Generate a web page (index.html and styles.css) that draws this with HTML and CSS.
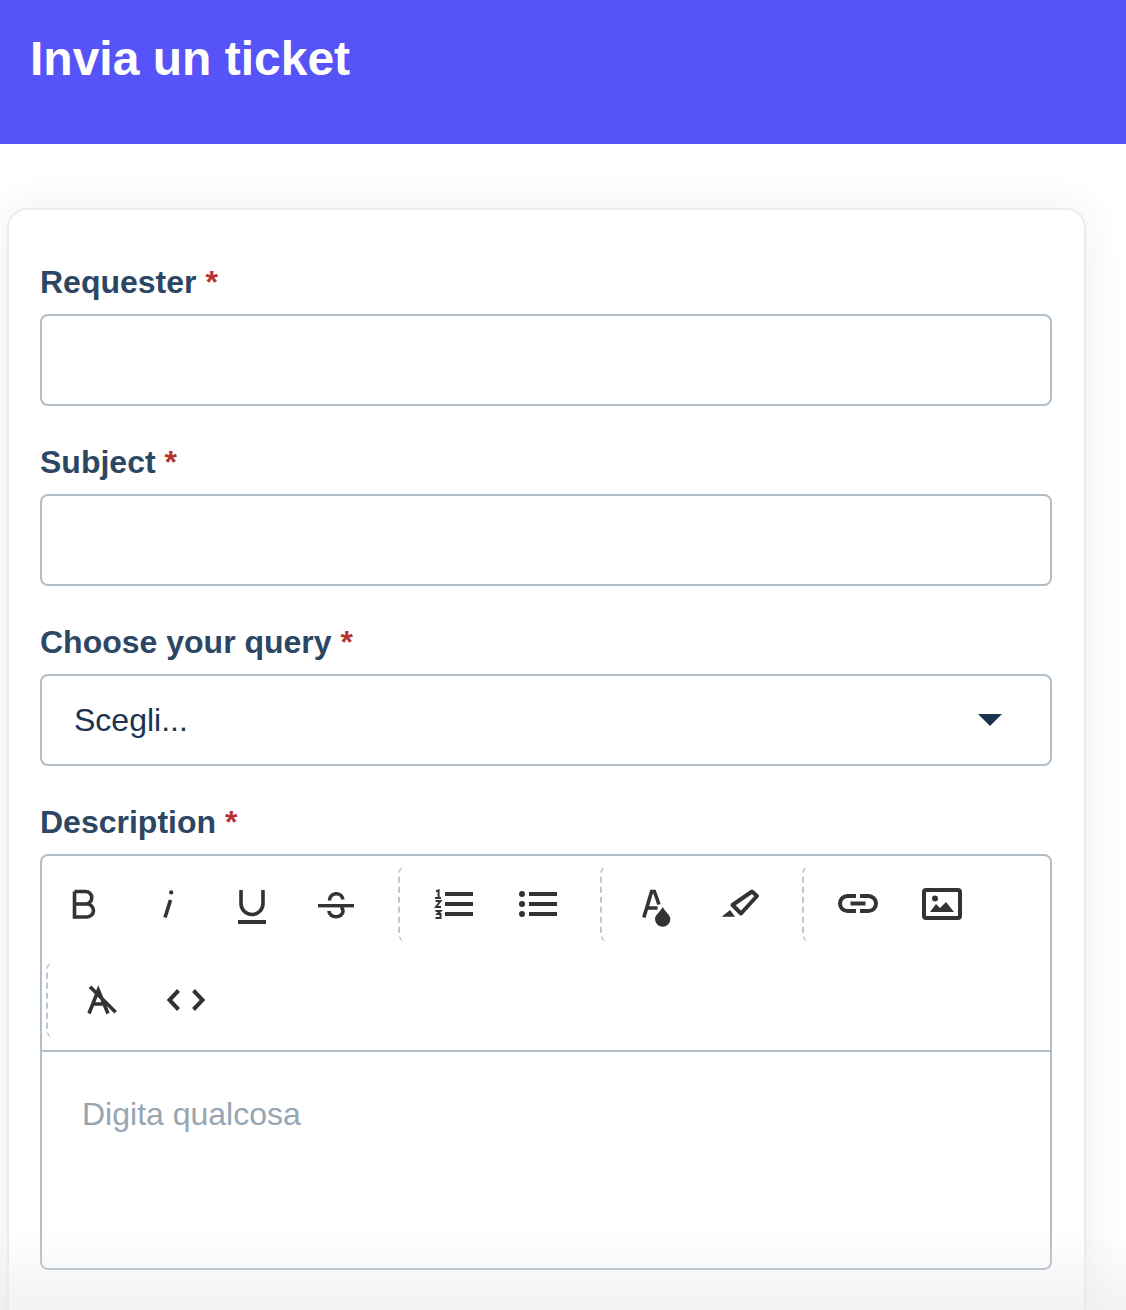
FILE: index.html
```html
<!DOCTYPE html>
<html lang="it">
<head>
<meta charset="utf-8">
<title>Invia un ticket</title>
<link rel="stylesheet" href="styles.css">
</head>
<body>
<header class="banner"><h1 class="banner-title">Invia un ticket</h1></header>
<main class="card">
  <div class="field">
    <label class="label">Requester <span class="req">*</span></label>
    <input class="control" type="text">
  </div>
  <div class="field">
    <label class="label">Subject <span class="req">*</span></label>
    <input class="control" type="text">
  </div>
  <div class="field">
    <label class="label">Choose your query <span class="req">*</span></label>
    <div class="select-wrap">
      <select class="control select"><option>Scegli...</option></select>
      <span class="caret"></span>
    </div>
  </div>
  <div class="field">
    <label class="label">Description <span class="req">*</span></label>
    <div class="editor">
      <div class="toolbar">
        <div class="group group-first">
          <button class="tool"><svg class="icon" viewBox="0 0 40 40"><path class="s3" d="M10.5 7.5H21.5a6.2 6.2 0 0 1 0 12.5H10.5M21.5 20H23a6.5 6.5 0 0 1 0 13H10.5V7.5"/></svg></button>
          <button class="tool"><svg class="icon" viewBox="0 0 40 40"><path class="s3" d="M22.5 16L17 33.5"/><circle class="f" cx="23.2" cy="8.4" r="2.1"/></svg></button>
          <button class="tool"><svg class="icon" viewBox="0 0 40 40"><path class="s3" d="M9 6V19.5a11 11 0 0 0 22 0V6"/><rect class="f" x="6" y="36" width="28" height="4"/></svg></button>
          <button class="tool"><svg class="icon" viewBox="0 0 40 40"><path class="s3" d="M13.5 16.5a6.8 7 0 0 1 13.5-1M13 27a7 5.8 0 0 0 14 0c0-2-.8-3-2-4"/><rect class="f" x="2" y="20" width="36" height="3.4"/></svg></button>
        </div>
        <div class="group">
          <button class="tool"><svg class="icon" viewBox="0 0 40 40"><path class="f" d="M11 8h28v4H11zM11 18h28v4H11zM11 28h28v4H11z"/><path class="s2" d="M2 7.2L4.6 6.4V14M1 14H7M1.5 17H6.5L2 23H7M1.5 27H6.5L3.5 30H6.5V34H1.5"/></svg></button>
          <button class="tool"><svg class="icon" viewBox="0 0 40 40"><path class="f" d="M11 8h28v4H11zM11 18h28v4H11zM11 28h28v4H11z"/><circle class="f" cx="4" cy="10" r="3"/><circle class="f" cx="4" cy="20" r="3"/><circle class="f" cx="4" cy="30" r="3"/></svg></button>
        </div>
        <div class="group">
          <button class="tool"><svg class="icon" viewBox="0 0 40 40"><path class="s3" d="M7.8 33.5L15.6 7.5H18.4L23 20.5M11 24H21.5"/><path class="f" d="M26.7 23C24 28 19 31 19 35a7.7 7.7 0 0 0 15.4 0C34.4 31 29.4 28 26.7 23Z"/></svg></button>
          <button class="tool"><svg class="icon" viewBox="0 0 40 40"><path class="s4 join" d="M32 7.5L37 12L21 29.5L12.5 21Z"/><path class="f" d="M1.7 32.7L10 26L15 32.7Z"/></svg></button>
        </div>
        <div class="group">
          <button class="tool"><svg class="icon" viewBox="0 0 40 40"><path class="s4" d="M18 12H9.5a7.5 7.5 0 0 0 0 15H18M22 12H30.5a7.5 7.5 0 0 1 0 15H22M12.5 19.5H27.5"/></svg></button>
          <button class="tool"><svg class="icon" viewBox="0 0 40 40"><rect class="s4" x="2" y="6" width="36" height="28" rx="2"/><circle class="f" cx="13" cy="14.5" r="3"/><path class="f" d="M8 28L14 20L18 24L24 18L32 28Z"/></svg></button>
        </div>
        <div class="group group-wrap">
          <button class="tool"><svg class="icon" viewBox="0 0 40 40"><path class="s3" d="M7 33.5L16.3 10L26 33.5M11 24H23M8 6.7L33.7 32.3"/></svg></button>
          <button class="tool"><svg class="icon" viewBox="0 0 40 40"><path class="s4" d="M12.5 10.5L3.5 20L12.5 29.5M27.5 10.5L36.5 20L27.5 29.5"/></svg></button>
        </div>
      </div>
      <div class="editor-body">Digita qualcosa</div>
    </div>
  </div>
</main>
<div class="page-fade"></div>
</body>
</html>
```
FILE: styles.css
```css
* { box-sizing: border-box; }
html, body { margin: 0; height: 1310px; overflow: hidden; background: #fff; }
body { font-family: "Liberation Sans", Arial, sans-serif; color: #1c3350; }

.banner { background: #5654f9; height: 144px; padding: 28px 30px 0; }
.banner-title { margin: 0; color: #fff; font-size: 48px; line-height: 61px; font-weight: 700; }

.card {
  width: 1079px;
  margin: 64px 0 0 7px;
  padding: 48px 32px 60px 31px;
  background: #fff;
  border: 2px solid #e9edf1;
  border-radius: 20px;
  box-shadow: 0 0 40px rgba(40, 50, 70, .08);
}

.field { margin-bottom: 32px; }
.label { display: block; margin-bottom: 8px; font-size: 32px; line-height: 48px; font-weight: 700; color: #2c4763; }
.req { color: #b83330; }

.control {
  display: block;
  width: 100%;
  height: 92px;
  padding: 0 32px;
  background: #fff;
  border: 2px solid #b1bec9;
  border-radius: 8px;
  font: 32px "Liberation Sans", Arial, sans-serif;
  color: #1c3350;
  outline: none;
}
.select { appearance: none; -webkit-appearance: none; }
.select-wrap { position: relative; }
.caret {
  position: absolute;
  right: 50px;
  top: 40px;
  width: 0;
  height: 0;
  border-left: 12px solid transparent;
  border-right: 12px solid transparent;
  border-top: 12px solid #1c3350;
}

.editor { border: 2px solid #b1bec9; border-radius: 8px; background: #fff; }
.toolbar { display: flex; flex-wrap: wrap; padding: 10px 0 12px; border-bottom: 2px solid #b1bec9; }
.group { display: flex; margin-left: 20px; padding-left: 12px; border-left: 2px dashed #bcc7d1; border-radius: 8px; }
.group-first { margin-left: 0; padding-left: 0; border-left: 0; }
.group-wrap { margin: 20px 0 0 4px; }
.tool { display: flex; align-items: center; justify-content: center; width: 84px; height: 76px; padding: 0; background: none; border: 0; }
.icon { display: block; width: 40px; height: 40px; overflow: visible; }
.f { fill: #333; }
.s2, .s3, .s4 { fill: none; stroke: #333; }
.s2 { stroke-width: 2; }
.s3 { stroke-width: 3.6; }
.s4 { stroke-width: 4; }
.join { stroke-linejoin: round; }

.editor-body { height: 216px; padding: 40px; font-size: 32px; line-height: 44px; color: #98a5b1; }

.page-fade {
  position: fixed;
  left: 0;
  right: 0;
  bottom: 0;
  height: 80px;
  background: linear-gradient(rgba(230, 230, 232, 0), rgba(230, 230, 232, .5));
  pointer-events: none;
}
```
